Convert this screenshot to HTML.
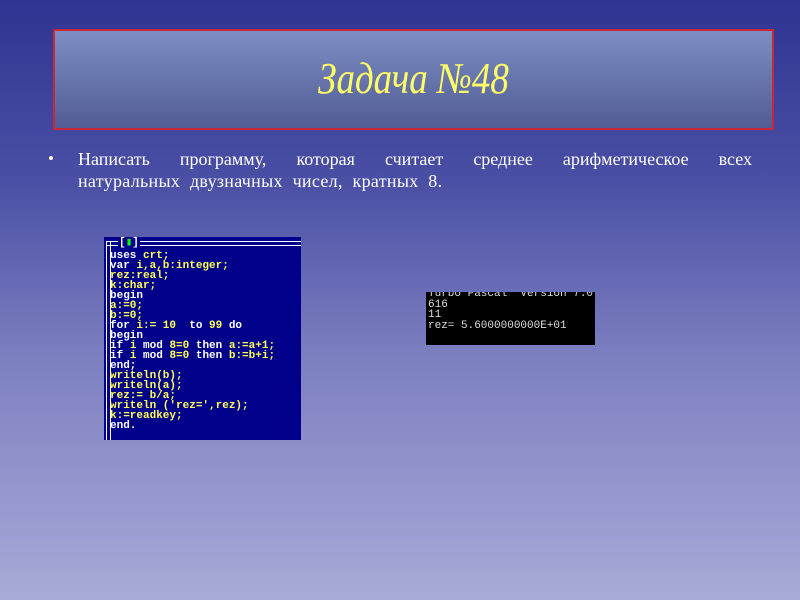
<!DOCTYPE html>
<html><head><meta charset="utf-8"><style>
body{margin:0;width:800px;height:600px;overflow:hidden;background:linear-gradient(#2f3492 0%,#4a4fa4 30%,#7d80c0 60%,#a8aad8 100%);font-family:"Liberation Serif",serif;position:relative}
.t{position:absolute;left:53px;top:29px;width:717px;height:97px;border:2px solid #c8283a;background:linear-gradient(#7b8ec3,#525c95)}
.t div{position:absolute;left:0;right:0;top:22px;text-align:center;color:#ffff66;font-style:italic;font-size:44px;transform:scaleX(0.84)}
.b{position:absolute;left:78px;width:674px;color:#fff;font-size:18px;line-height:22px}
.j{text-align:justify;text-align-last:justify}
.bul{position:absolute;left:48px;top:148px;color:#fff;font-size:17px;line-height:22px}
.code{position:absolute;left:104px;top:237px;width:197px;height:203px;background:#00008a;overflow:hidden;font-family:"Liberation Mono",monospace;font-weight:bold;font-size:11px;line-height:10px;color:#fff}
.code pre{margin:0;position:absolute;left:6px;top:14px;font:inherit}
.y{color:#ffff55}
.bord{position:absolute;left:2px;top:4px;bottom:0;width:3px;border-left:1px solid #fff;border-right:1px solid #fff}
.top{position:absolute;left:2px;right:0;top:4px;height:3px;border-top:1px solid #fff;border-bottom:1px solid #fff}
.out{position:absolute;left:426px;top:292px;width:169px;height:53px;background:#000;color:#ddd;font-family:"Liberation Mono",monospace;font-size:11px;line-height:10.5px;overflow:hidden}
.out pre{margin:0;position:absolute;left:2px;top:-3px;font:inherit}
</style></head><body>
<div class="t"><div>Задача №48</div></div>
<div class="bul">•</div>
<div class="b j" style="top:148px">Написать программу, которая считает среднее арифметическое всех</div>
<div class="b" style="top:170px;word-spacing:5px;letter-spacing:0.3px">натуральных двузначных чисел, кратных 8.</div>
<div class="code"><div class="top"></div><div class="bord"></div>
<span style="position:absolute;left:14px;top:1px;background:#00008a;padding:0 1px">[<span style="color:#0f0">▮</span>]</span>
<pre>uses <span class="y">crt;</span>
var <span class="y">i,a,b:integer;</span>
<span class="y">rez:real;</span>
<span class="y">k:char;</span>
begin
<span class="y">a:=0;</span>
<span class="y">b:=0;</span>
for <span class="y">i:= 10</span>  to <span class="y">99</span> do
begin
if <span class="y">i</span> mod <span class="y">8=0</span> then <span class="y">a:=a+1;</span>
if <span class="y">i</span> mod <span class="y">8=0</span> then <span class="y">b:=b+i;</span>
end;
<span class="y">writeln(b);</span>
<span class="y">writeln(a);</span>
<span class="y">rez:= b/a;</span>
<span class="y">writeln ('rez=',rez);</span>
<span class="y">k:=readkey;</span>
end.</pre></div>
<div class="out"><pre>Turbo Pascal  Version 7.0
616
11
rez= 5.6000000000E+01</pre></div>
</body></html>
